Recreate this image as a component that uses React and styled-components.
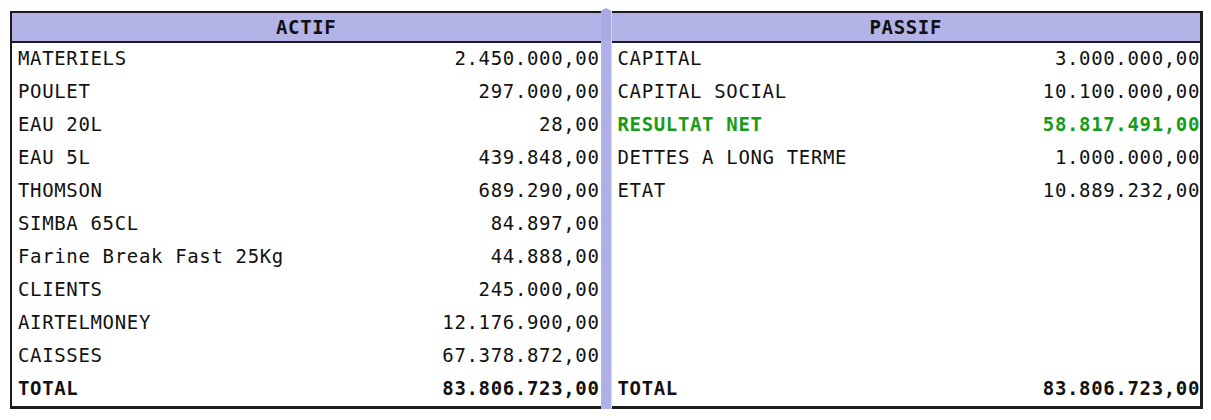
import React from 'react'
import styled, { createGlobalStyle } from 'styled-components'

const actif = [
    { label: `MATERIELS`, value: `2.450.000,00` },
    { label: `POULET`, value: `297.000,00` },
    { label: `EAU 20L`, value: `28,00` },
    { label: `EAU 5L`, value: `439.848,00` },
    { label: `THOMSON`, value: `689.290,00` },
    { label: `SIMBA 65CL`, value: `84.897,00` },
    { label: `Farine Break Fast 25Kg`, value: `44.888,00` },
    { label: `CLIENTS`, value: `245.000,00` },
    { label: `AIRTELMONEY`, value: `12.176.900,00` },
    { label: `CAISSES`, value: `67.378.872,00` },
]

const passif = [
    { label: `CAPITAL`, value: `3.000.000,00` },
    { label: `CAPITAL SOCIAL`, value: `10.100.000,00` },
    { label: `RESULTAT NET`, value: `58.817.491,00`, highlight: true },
    { label: `DETTES A LONG TERME`, value: `1.000.000,00` },
    { label: `ETAT`, value: `10.889.232,00` },
    {}, {}, {}, {}, {},
]

const total = `83.806.723,00`

const Global = createGlobalStyle`
body {
    margin: 0;
    background: #ffffff;
    font-family: "DejaVu Sans Mono", "Liberation Mono", monospace;
    color: #111111;
}`

const Sheet = styled.div`
display: flex;
flex-direction: row;
width: 1193px;
margin: 11px 0 0 10px;
`

const Panel = styled.div`
flex: 1;
display: flex;
flex-direction: column;
border-top: 2px solid #1c1c1c;
border-bottom: 3px solid #1c1c1c;
${props => props.side === `left` ? `border-left: 2px solid #1c1c1c;` : `border-right: 3px solid #1c1c1c;`}
`

const Header = styled.div`
height: 28px;
display: flex;
align-items: center;
justify-content: center;
background: #b3b3e7;
border-bottom: 2px solid #1c1c1c;
font-weight: bold;
font-size: 19px;
letter-spacing: 0.65px;
`

const Row = styled.div`
box-sizing: border-box;
height: 33px;
display: flex;
flex-direction: row;
align-items: center;
justify-content: space-between;
padding: 0 ${props => props.pr}px 4px 6px;
font-size: 19px;
letter-spacing: 0.65px;
font-weight: ${props => props.bold ? `bold` : `normal`};
color: ${props => props.green ? `#169c16` : `#111111`};
white-space: pre;
`

const Divider = styled.div`
width: 11px;
flex-shrink: 0;
margin: -3px 0 -3px 0;
background: linear-gradient(to bottom, #a9a9e2 0, #a9a9e2 33px, #b0b0e8 33px);
clip-path: polygon(0 3px, 50% 0, 100% 3px, 100% calc(100% - 3px), 50% 100%, 0 calc(100% - 3px));
`

const Side = ({ side, title, rows, pr }) => (
    <Panel side={side}>
        <Header>{title}</Header>
        {
            rows.map((item, index) => (
                <Row key={index} pr={pr} bold={item.highlight} green={item.highlight}>
                    <span>{item.label || ``}</span>
                    <span>{item.value || ``}</span>
                </Row>
            ))
        }
        <Row pr={pr} bold>
            <span>TOTAL</span>
            <span>{total}</span>
        </Row>
    </Panel>
)

const App = () => {
    return (
        <>
            <Global />
            <Sheet>
                <Side side={`left`} title={`ACTIF`} rows={actif} pr={1} />
                <Divider />
                <Side side={`right`} title={`PASSIF`} rows={passif} pr={0} />
            </Sheet>
        </>
    )
}

export default App
